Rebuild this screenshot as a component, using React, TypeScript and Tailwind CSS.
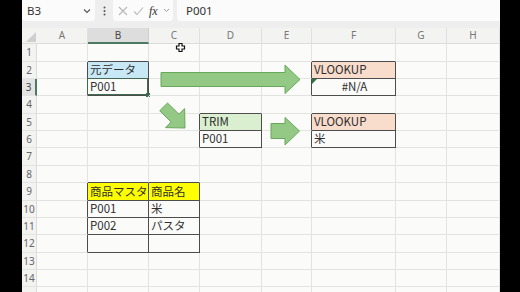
import React from 'react';

const cols = [
  { name: 'A', w: 'w-[51px]' },
  { name: 'B', w: 'w-[61px]' },
  { name: 'C', w: 'w-[51px]' },
  { name: 'D', w: 'w-[62px]' },
  { name: 'E', w: 'w-[50px]' },
  { name: 'F', w: 'w-[84px]' },
  { name: 'G', w: 'w-[51px]' },
  { name: 'H', w: 'w-[53px]' },
];

const rowHeights = ['h-[18px]', 'h-[17px]', 'h-[17px]', 'h-[18px]', 'h-[17px]', 'h-[17px]', 'h-[18px]', 'h-[17px]', 'h-[18px]', 'h-[17px]', 'h-[17px]', 'h-[18px]', 'h-[17px]', 'h-[17px]', 'h-[17px]'];

type Cell = { text?: string; bg?: string; center?: boolean; error?: boolean };

const cells: Record<string, Cell> = {
  B2: { text: '元データ', bg: 'bg-[#c8e8f6]' },
  B3: { text: 'P001' },
  F2: { text: 'VLOOKUP', bg: 'bg-[#f8dccc]' },
  F3: { text: '#N/A', center: true, error: true },
  D5: { text: 'TRIM', bg: 'bg-[#daefd0]' },
  D6: { text: 'P001' },
  F5: { text: 'VLOOKUP', bg: 'bg-[#f8dccc]' },
  F6: { text: '米' },
  B9: { text: '商品マスタ', bg: 'bg-[#ffff00]' },
  C9: { text: '商品名', bg: 'bg-[#ffff00]' },
  B10: { text: 'P001' },
  C10: { text: '米' },
  B11: { text: 'P002' },
  C11: { text: 'パスタ' },
  B12: {},
  C12: {},
};

const tables = [
  ['B', 2, 'B', 3],
  ['F', 2, 'F', 3],
  ['D', 5, 'D', 6],
  ['F', 5, 'F', 6],
  ['B', 9, 'C', 12],
] as const;

const letters = 'ABCDEFGH';

function inTable(c: number, r: number) {
  return tables.some(([c1, r1, c2, r2]) => {
    const a = letters.indexOf(c1);
    const b = letters.indexOf(c2);
    return c >= a && c <= b && r >= r1 && r <= r2;
  });
}

function SheetCell({ ci, r }: { ci: number; r: number }) {
  const key = `${letters[ci]}${r}`;
  const cell = cells[key];
  const rightDark = inTable(ci, r) || inTable(ci + 1, r);
  const bottomDark = inTable(ci, r) || inTable(ci, r + 1);
  const selected = key === 'B3';
  return (
    <div
      className={`relative flex shrink-0 items-end overflow-visible border-r border-b ${cols[ci].w} ${rightDark ? 'border-r-[#4d4d4d]' : 'border-r-[#e3e3e1]'} ${bottomDark ? 'border-b-[#4d4d4d]' : 'border-b-[#e3e3e1]'} ${cell?.bg ?? ''} ${cell?.center ? 'justify-center' : 'justify-start'}`}
    >
      {cell?.text && (
        <span className="whitespace-nowrap pb-[1px] pl-[2px] text-[11.5px] leading-[15px] text-[#2e2e2e]">{cell.text}</span>
      )}
      {cell?.error && (
        <svg className="absolute left-0 top-0" width="5" height="5" viewBox="0 0 5 5">
          <polygon points="0,0 5,0 0,5" fill="#2a7a3a" />
        </svg>
      )}
      {selected && (
        <>
          <div className="pointer-events-none absolute -left-[1px] -top-[1px] -right-[0px] -bottom-[0px] border-[1.5px] border-[#3f6b52]" />
          <div className="absolute -bottom-[2px] -right-[2px] h-[4px] w-[4px] bg-[#3f6b52]" />
        </>
      )}
    </div>
  );
}

export default function App() {
  return (
    <div className="relative flex h-[292px] w-[520px] overflow-hidden bg-black font-['Noto_Sans_CJK_JP','Noto_Sans',sans-serif]">
      <div className="w-[22px] shrink-0" />
      <div className="flex w-[478px] shrink-0 flex-col bg-[#fbfbfa]">
        {/* formula bar */}
        <div className="flex h-[28px] shrink-0 items-start gap-[4px] bg-[#eeeeee] pt-0 font-['Noto_Sans',sans-serif]">
          <div className="flex h-[21px] w-[73px] items-center justify-between rounded-b-[3px] bg-[#fbfbfb] pl-[5px] pr-[4px]">
            <span className="text-[11.5px] text-[#333]">B3</span>
            <svg width="8" height="6" viewBox="0 0 8 6"><path d="M1 1.5 L4 4.5 L7 1.5" fill="none" stroke="#555" strokeWidth="1.1" /></svg>
          </div>
          <div className="flex h-[21px] w-[10px] items-center justify-center">
            <svg width="3" height="10" viewBox="0 0 3 10"><circle cx="1.5" cy="1.5" r="1" fill="#555" /><circle cx="1.5" cy="5" r="1" fill="#555" /><circle cx="1.5" cy="8.5" r="1" fill="#555" /></svg>
          </div>
          <div className="flex h-[21px] w-[60px] items-center gap-[5px] rounded-b-[3px] bg-[#fbfbfb] pl-[5px]">
            <svg width="10" height="10" viewBox="0 0 10 10"><path d="M1 1 L9 9 M9 1 L1 9" stroke="#b8b8b8" strokeWidth="1.1" /></svg>
            <svg width="11" height="10" viewBox="0 0 11 10"><path d="M1 5.5 L4 8.5 L10 1.5" fill="none" stroke="#b8b8b8" strokeWidth="1.1" /></svg>
            <span className="font-['Liberation_Serif',serif] text-[12px] italic leading-none text-[#333]">fx</span>
            <svg width="7" height="5" viewBox="0 0 7 5"><path d="M1 1 L3.5 3.5 L6 1" fill="none" stroke="#999" strokeWidth="1" /></svg>
          </div>
          <div className="flex h-[21px] flex-1 items-center rounded-bl-[3px] bg-[#fbfbfb] pl-[9px]">
            <span className="text-[11.5px] text-[#333]">P001</span>
          </div>
        </div>
        {/* column headers */}
        <div className="flex h-[16px] shrink-0 bg-[#f3f3f2] font-['Noto_Sans',sans-serif]">
          <div className="relative w-[15px] shrink-0 border-b border-[#dcdcdc]">
            <svg className="absolute bottom-[1px] right-[1px]" width="10" height="10" viewBox="0 0 10 10"><polygon points="10,0 10,10 0,10" fill="#cfcfcf" /></svg>
          </div>
          {cols.map((c) => (
            <div
              key={c.name}
              className={`flex shrink-0 items-center justify-center border-r text-[10px] ${c.w} ${c.name === 'B' ? 'border-b-2 border-b-[#4d7a62] border-r-[#cfcfcf] bg-[#dddddd] text-[#444]' : 'border-b border-b-[#dcdcdc] border-r-[#e0e0e0] text-[#777]'}`}
            >
              {c.name}
            </div>
          ))}
        </div>
        {/* rows */}
        {rowHeights.map((h, i) => {
          const r = i + 1;
          return (
            <div key={r} className={`flex shrink-0 ${h}`}>
              <div
                className={`flex w-[15px] shrink-0 items-center justify-center border-b border-b-[#e3e3e1] font-['Noto_Sans',sans-serif] text-[10px] ${r === 3 ? 'border-r-2 border-r-[#4d7a62] bg-[#e4e4e4] text-[#444]' : 'border-r border-r-[#dcdcdc] bg-[#f3f3f2] text-[#666]'}`}
              >
                {r < 15 ? r : ''}
              </div>
              {cols.map((c, ci) => (
                <SheetCell key={c.name} ci={ci} r={r} />
              ))}
            </div>
          );
        })}
      </div>
      <div className="flex-1" />
      {/* shapes drawn over the sheet */}
      <svg className="pointer-events-none absolute left-0 top-0" width="520" height="292" viewBox="0 0 520 292">
        <polygon points="161,72.5 285,72.5 285,65 300,79.5 285,93.5 285,86.5 161,86.5" fill="#93c985" stroke="#68a85a" strokeWidth="1" />
        <polygon points="271,123.5 285,123.5 285,117.5 299.5,131 285,145 285,138.5 271,138.5" fill="#93c985" stroke="#68a85a" strokeWidth="1" />
        <polygon points="167.5,103 179,114.2 184.6,108.6 185,128 165.6,127.6 171.2,122 159.7,110.8" fill="#93c985" stroke="#68a85a" strokeWidth="1" />
        <path d="M179 43.5 h3 v2.5 h2.5 v3 h-2.5 v2.5 h-3 v-2.5 h-2.5 v-3 h2.5 z" fill="#fff" stroke="#111" strokeWidth="1.2" />
      </svg>
    </div>
  );
}
